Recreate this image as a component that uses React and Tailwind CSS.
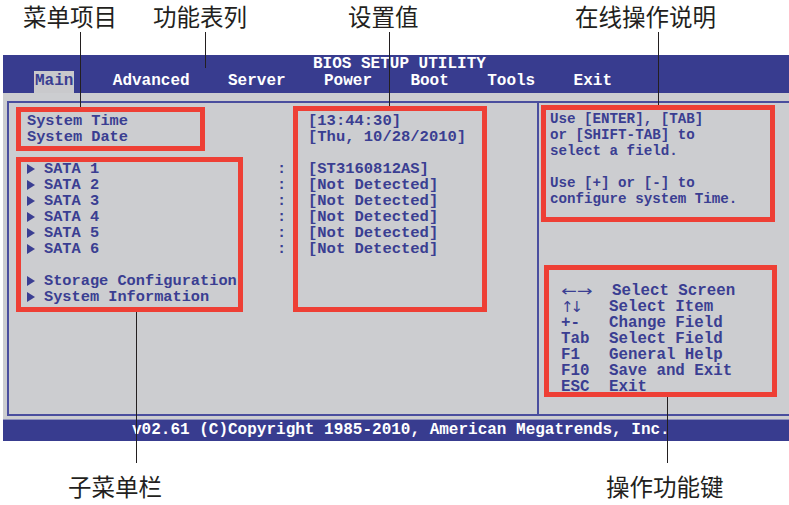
import React from 'react';

// BIOS setup screen with Chinese callout labels

const rows = [
  { label: 'System Time', value: '[13:44:30]' },
  { label: 'System Date', value: '[Thu, 10/28/2010]' },
  null,
  { label: 'SATA 1', sub: true, colon: true, value: '[ST3160812AS]' },
  { label: 'SATA 2', sub: true, colon: true, value: '[Not Detected]' },
  { label: 'SATA 3', sub: true, colon: true, value: '[Not Detected]' },
  { label: 'SATA 4', sub: true, colon: true, value: '[Not Detected]' },
  { label: 'SATA 5', sub: true, colon: true, value: '[Not Detected]' },
  { label: 'SATA 6', sub: true, colon: true, value: '[Not Detected]' },
  null,
  { label: 'Storage Configuration', sub: true },
  { label: 'System Information', sub: true },
];

const menu = ['Advanced', 'Server', 'Power', 'Boot', 'Tools', 'Exit'];

const keys = [
  { k: '←→', d: 'Select Screen', wide: true },
  { k: '↑↓', d: 'Select Item', tall: true },
  { k: '+-', d: 'Change Field' },
  { k: 'Tab', d: 'Select Field' },
  { k: 'F1', d: 'General Help' },
  { k: 'F10', d: 'Save and Exit' },
  { k: 'ESC', d: 'Exit' },
];

const Triangle = () => (
  <svg className="w-[9px] h-[10px] mr-[8px] shrink-0" viewBox="0 0 9 10">
    <polygon points="0,0 8,5 0,10" fill="currentColor" />
  </svg>
);

const Callout = ({ text, left, top }) => (
  <div
    className="absolute font-['Noto_Sans_CJK_SC',sans-serif] font-normal text-[23.5px] leading-none text-[#231f20] whitespace-nowrap"
    style={{ left, top }}
  >
    {text}
  </div>
);

const VLine = ({ x, y1, y2 }) => (
  <div className="absolute w-px bg-[#231f20]" style={{ left: x, top: y1, height: y2 - y1 }} />
);

const RedBox = ({ x, y, w, h }) => (
  <div className="absolute border-[5px] border-[#ee3f35]" style={{ left: x, top: y, width: w, height: h }} />
);

function KeyLabel({ row }) {
  if (row.wide) {
    return (
      <div className="w-[48px] font-['DejaVu_Sans',sans-serif] font-normal text-[15px]">
        <span className="inline-block origin-left scale-x-[1.25]">{row.k}</span>
      </div>
    );
  }
  if (row.tall) {
    return (
      <div className="w-[48px] font-['DejaVu_Sans',sans-serif] font-normal text-[15px] tracking-[-3px]">
        {row.k}
      </div>
    );
  }
  return <div className="w-[48px]">{row.k}</div>;
}

export default function App() {
  return (
    <div className="relative w-[789px] h-[505px] bg-white overflow-hidden font-['Liberation_Mono',monospace] font-bold">
      <div className="h-[55px]" />

      {/* header bar */}
      <div className="ml-[3px] h-[38px] bg-[#383c8f] text-white text-[16px]">
        <div className="h-[16px] leading-[16px] pt-[1px] pl-[310px] whitespace-pre">BIOS SETUP UTILITY</div>
        <div className="h-[22px] flex gap-[38.4px] pl-[31px] leading-[16px]">
          <div className="h-full px-[1px] pt-[2px] bg-[#c9c9cc] text-[#3a3e92]">Main</div>
          {menu.map((m) => (
            <div key={m} className="pt-[2px]">{m}</div>
          ))}
        </div>
      </div>

      {/* body */}
      <div className="ml-[3px] h-[326px] bg-[#cccdd0] pl-[4px] pt-[8px] pb-[3px] text-[#3a3e92]">
        <div className="h-full flex border-l-2 border-t-2 border-b-2 border-[#4a4e9e]">
          <div className="w-[530px] shrink-0 border-r-2 border-[#4a4e9e] pl-[18px] pt-[10px] text-[15.3px]">
            {rows.map((r, i) =>
              r ? (
                <div key={i} className="flex h-[16px] leading-[16px] items-center whitespace-pre">
                  <div className="w-[250px] flex items-center">
                    {r.sub && <Triangle />}
                    <span>{r.label}</span>
                  </div>
                  <div className="w-[31px]">{r.colon ? ':' : ''}</div>
                  <div className="text-[15.5px]">{r.value}</div>
                </div>
              ) : (
                <div key={i} className="h-[16px]" />
              )
            )}
          </div>
          <div className="flex-1 pt-[8px]">
            <div className="pl-[11px] text-[14.2px] leading-[16px] whitespace-pre">
              <div>Use [ENTER], [TAB]</div>
              <div>or [SHIFT-TAB] to</div>
              <div>select a field.</div>
              <div className="h-[16px]" />
              <div>Use [+] or [-] to</div>
              <div>configure system Time.</div>
            </div>
            <div className="mt-[76px] pl-[22px] text-[15.8px] leading-[16px]">
              {keys.map((row) => (
                <div key={row.k} className="flex h-[16px] whitespace-pre">
                  <KeyLabel row={row} />
                  <div className={row.wide ? 'pl-[3px]' : ''}>{row.d}</div>
                </div>
              ))}
            </div>
          </div>
        </div>
      </div>

      {/* footer bar */}
      <div className="ml-[3px] h-[22px] border-t border-[#8e90bd] bg-[#383c8f] pl-[129px] pt-[2px] text-white text-[16px] leading-[16px] whitespace-pre">
        v02.61 (C)Copyright 1985-2010, American Megatrends, Inc.
      </div>

      {/* red highlight boxes */}
      <RedBox x={16} y={107} w={189} h={44} />
      <RedBox x={16} y={157} w={227} h={155} />
      <RedBox x={293} y={106} w={194} h={206} />
      <RedBox x={541} y={105} w={234} h={117} />
      <RedBox x={544} y={265} w={233} h={132} />

      {/* callout lines */}
      <VLine x={80} y1={32} y2={107} />
      <VLine x={205} y1={32} y2={68} />
      <VLine x={389} y1={32} y2={106} />
      <VLine x={658} y1={32} y2={105} />
      <VLine x={136} y1={312} y2={463} />
      <VLine x={667} y1={397} y2={463} />

      {/* callout labels */}
      <Callout text="菜单项目" left={23} top={5} />
      <Callout text="功能表列" left={153} top={5} />
      <Callout text="设置值" left={348} top={5} />
      <Callout text="在线操作说明" left={575} top={5} />
      <Callout text="子菜单栏" left={68} top={475} />
      <Callout text="操作功能键" left={606} top={475} />
    </div>
  );
}
